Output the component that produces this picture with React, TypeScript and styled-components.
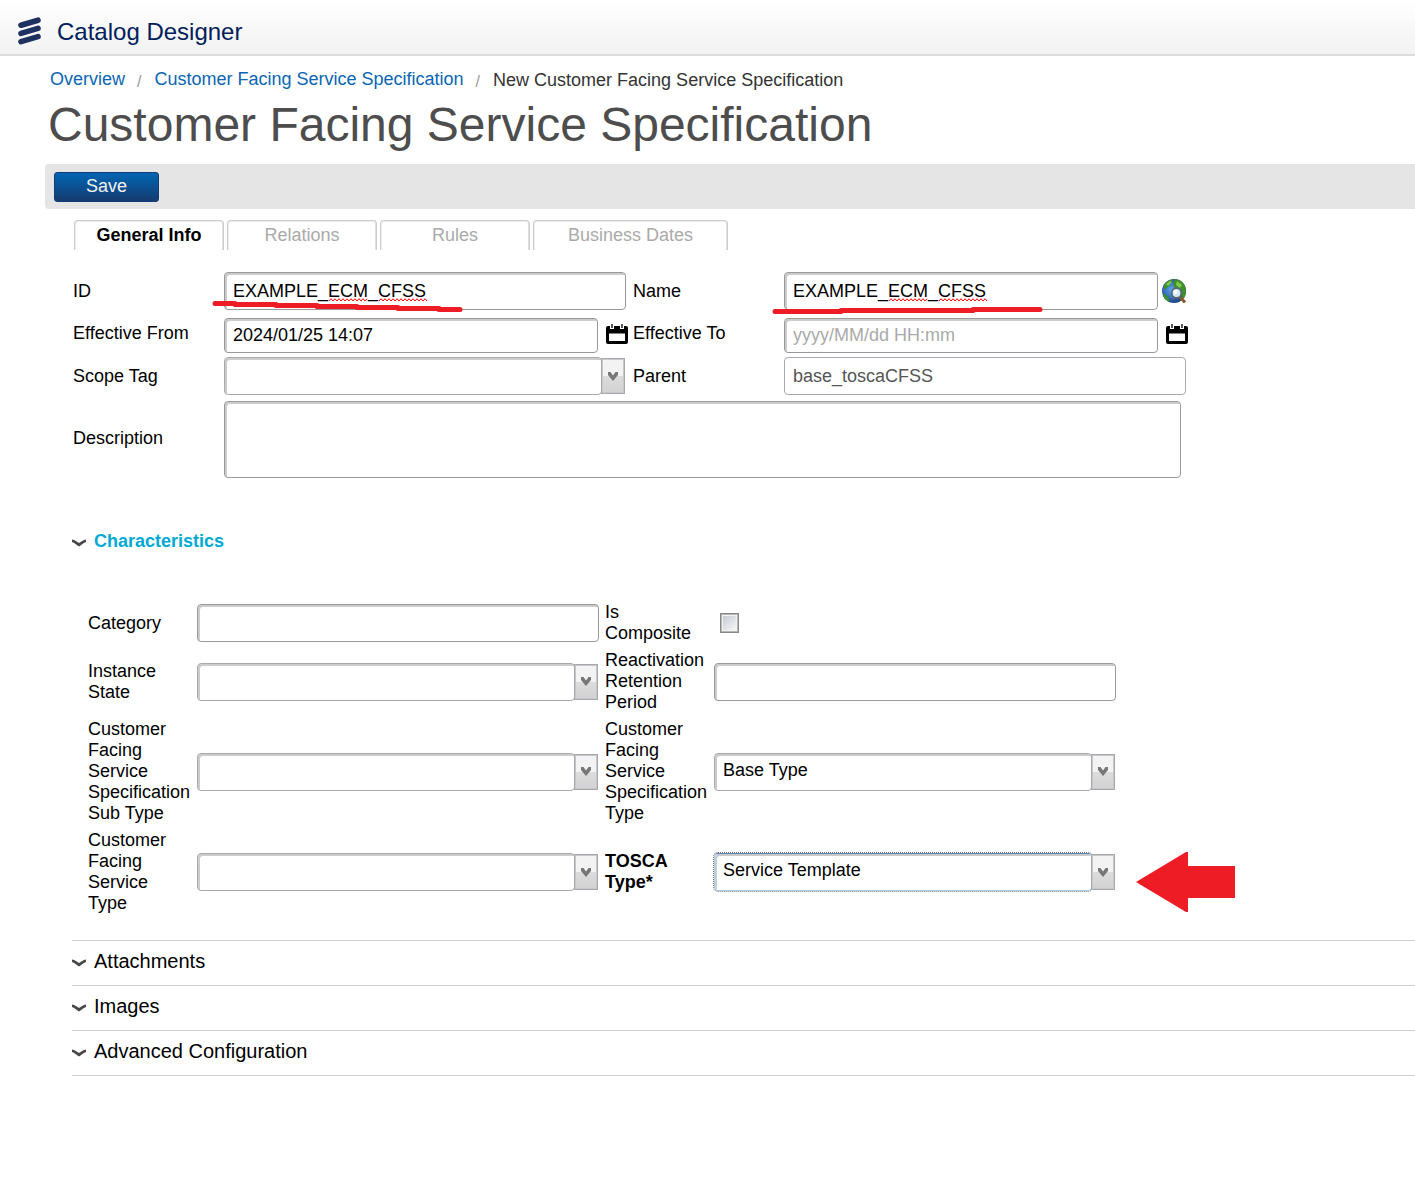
import React, { useId, useState } from "react";
import styled, { createGlobalStyle, css } from "styled-components";

const GlobalStyle = createGlobalStyle`
  *, *::before, *::after { box-sizing: border-box; }
  body {
    margin: 0;
    background: #fff;
    color: #000;
    font: 18px/21px "Liberation Sans", Arial, Helvetica, sans-serif;
    overflow-x: hidden;
  }
  button, input, select, textarea { font: inherit; color: inherit; }
`;

const ANNOTATION_RED = "#ee1c24";

/* ---------- page frame ---------- */

const Header = styled.header`
  display: flex;
  align-items: center;
  gap: 15px;
  height: 56px;
  padding: 8px 17px 0;
  border-bottom: 2px solid #dcdcdc;
  background: linear-gradient(#fff, #f2f2f2);
`;

const AppName = styled.span`
  padding-top: 2px;
  font-size: 24px;
  line-height: 28px;
  color: #00205b;
`;

const Main = styled.main`
  padding: 13px 0 40px 45px;
`;

const Crumbs = styled.nav`
  display: flex;
  padding-left: 5px;
  white-space: nowrap;
  a { color: #0a66b3; text-decoration: none; }
`;

const Slash = styled.span`
  padding: 2px 13px 0 12px;
  font-size: 16px;
  color: #999;
`;

const Current = styled.span`
  padding-top: 1px;
  color: #333;
`;

const Title = styled.h1`
  margin: 5px 0 11px;
  padding-left: 3px;
  font-size: 48px;
  line-height: 56px;
  font-weight: 400;
  color: #4d4d4d;
`;

const Toolbar = styled.div`
  display: flex;
  align-items: center;
  height: 45px;
  padding: 0 9px;
  border-radius: 4px 0 0 4px;
  background: #e5e5e5;
`;

const SaveButton = styled.button`
  width: 105px;
  height: 30px;
  padding: 0;
  border: 1px solid #143c74;
  border-radius: 3px;
  background: linear-gradient(#0066b3, #163a70);
  color: #f2f2f2;
`;

const Tabs = styled.div`
  display: flex;
  gap: 3px;
  padding: 11px 29px 0;
`;

const Tab = styled.button<{ $active?: boolean; $wide?: boolean }>`
  width: ${(p) => (p.$wide ? 195 : 150)}px;
  height: 30px;
  padding: 0;
  border: solid #ccc;
  border-width: 1px 1px 0;
  border-radius: 4px 4px 0 0;
  background: #fff;
  box-shadow: inset 1px 1px 0 #eee, inset -1px 0 0 #e0e0e0;
  color: ${(p) => (p.$active ? "#000" : "#aaa")};
  font-weight: ${(p) => (p.$active ? 700 : 400)};
`;

/* ---------- fields ---------- */

const boxed = css`
  min-width: 0;
  height: 38px;
  padding: 0 8px;
  border: 1px solid #999;
  border-radius: 4px;
  background: #fff;
  box-shadow: inset 2px 2px 0 #ccc;
  outline: none;
`;

const TextBox = styled.input<{ $short?: boolean }>`
  ${boxed}
  flex: 0 0 ${(p) => (p.$short ? 374 : 402)}px;
  width: ${(p) => (p.$short ? 374 : 402)}px;
  &::placeholder { color: #aaa; opacity: 1; }
  &:read-only { border-color: #a6abb3; box-shadow: none; color: #555; }
`;

const DateBox = styled(TextBox)`
  height: 35px;
`;

const TextArea = styled.textarea`
  ${boxed}
  display: block;
  width: 957px;
  height: 77px;
  resize: none;
`;

const Select = styled.select<{ $focused?: boolean }>`
  ${boxed}
  flex: 1;
  appearance: none;
  padding-bottom: 3px;
  border-color: #aaa;
  ${(p) =>
    p.$focused &&
    css`
      border-color: #5b83b8 #a9cdea #a9cdea;
      outline: 1px dotted #777;
    `}
`;

const SelectRow = styled.div`
  position: relative;
  display: flex;
  align-items: center;
  width: 401px;
`;

const DropArrow = styled.span`
  display: flex;
  align-items: center;
  justify-content: center;
  width: 24px;
  height: 36px;
  margin-left: -1px;
  border: 1px solid #a9a9ad;
  background: linear-gradient(#f3f3f3 50%, #dcdcdc 50%, #d2d2d2);
  box-shadow: inset 0 0 0 1px #c8c8cc;
  pointer-events: none;
`;

const IconButton = styled.button`
  display: flex;
  margin-left: 4px;
  padding: 0;
  border: 0;
  background: none;
`;

const DateButton = styled(IconButton)`
  margin-left: 8px;
  padding-bottom: 4px;
`;

const CheckBox = styled.input`
  appearance: none;
  width: 19px;
  height: 20px;
  margin: 0 0 0 6px;
  padding: 2px;
  border: 1px solid #888;
  background: linear-gradient(135deg, #c6cbd3, #f6f6f6) content-box, #f2f2f2;
  box-shadow: inset 0 0 0 1px #b5b5b5;
`;

const InfoGrid = styled.div`
  display: grid;
  grid-template-columns: 152px 408px 152px 404px;
  row-gap: 4px;
  align-items: center;
  padding: 22px 0 0 27px;
  & > label { padding-left: 1px; }
`;

const FieldRow = styled.div<{ $top?: number; $span?: boolean }>`
  position: relative;
  display: flex;
  align-items: center;
  padding-top: ${(p) => p.$top ?? 0}px;
  ${(p) => p.$span && "grid-column: span 3;"}
`;

const Overlay = styled.svg<{ $left: number; $top: number }>`
  position: absolute;
  left: ${(p) => p.$left}px;
  top: ${(p) => p.$top}px;
  pointer-events: none;
`;

/* ---------- sections ---------- */

const Sections = styled.div`
  margin: 41px 0 0 27px;
`;

const Section = styled.section`
  border-bottom: 1px solid #ccc;
`;

const SectionHead = styled.button<{ $accent?: boolean }>`
  display: flex;
  align-items: center;
  gap: 8px;
  width: 100%;
  height: 44px;
  padding: 0 0 ${(p) => (p.$accent ? 0 : 3)}px;
  border: 0;
  background: none;
  text-align: left;
  font-size: ${(p) => (p.$accent ? 18 : 20)}px;
  font-weight: ${(p) => (p.$accent ? 700 : 400)};
  color: ${(p) => (p.$accent ? "#00a9d4" : "#000")};
  svg { margin-top: 3px; }
`;

const CharGrid = styled.div`
  display: grid;
  grid-template-columns: 110px 407px 110px 402px;
  row-gap: 6px;
  align-items: center;
  padding: 39px 0 26px 15px;
`;

const CharLabel = styled.label<{ $required?: boolean }>`
  padding: 0 6px 0 1px;
  font-weight: ${(p) => (p.$required ? 700 : 400)};
`;

/* ---------- drawings ---------- */

const Logo = () => (
  <svg width="25" height="28" viewBox="0 0 25 28" aria-hidden="true">
    <g stroke="#1f3160" strokeWidth="5.6" strokeLinecap="round">
      <path d="M4 8.2 21 3.2M4 16.4 21 11.4M4 24.6 21 19.6" />
    </g>
  </svg>
);

const Chevron = () => (
  <svg width="14" height="8" viewBox="0 0 14 8" aria-hidden="true">
    <path d="M0 .5C3 1 5 3 7 4c2-1 4-3 7-3.5V3C11 4 9 6.5 7 7.6 5 6.5 3 4 0 3Z" fill="#484848" />
  </svg>
);

const Calendar = () => (
  <svg width="22" height="20" viewBox="0 0 22 20" aria-hidden="true">
    <path
      fillRule="evenodd"
      d="M2 2h2v3h4V2h6v3h4V2h2a2 2 0 0 1 2 2v14a2 2 0 0 1-2 2H2a2 2 0 0 1-2-2V4a2 2 0 0 1 2-2ZM3 9.500v7.500h16V9.500Z"
    />
    <path d="M6 0v4M16 0v4" stroke="#222" strokeWidth="1.5" />
  </svg>
);

const Globe = () => (
  <svg width="24" height="24" viewBox="0 0 24 24" aria-hidden="true">
    <defs>
      <radialGradient id="sea" cx=".4" cy=".45" r=".6">
        <stop offset="0" stopColor="#5da9f0" />
        <stop offset="1" stopColor="#163c7c" />
      </radialGradient>
    </defs>
    <circle cx="12" cy="12" r="12" fill="url(#sea)" />
    <path d="M2 6C5 2 8 0 12 0L9 3 7 4l1 2-3 3-3 1ZM13 0c6 0 11 5 11 12 0 4-1 6-3 8l-2-6-2-4-5-2-1-4ZM1 15l3 1 3 4 0 3c-4-2-6-5-6-8Z" fill="#3f8f2c" />
    <path d="m4 5 4-3 2 1-4 4ZM15 2l5 4-2 3-4-3Z" fill="#82c94e" />
    <path d="m18 18 5 5.500" stroke="#8b5a2b" strokeWidth="3" />
    <circle cx="14.500" cy="14" r="4.800" fill="#cfe9f5" stroke="#5c6670" strokeWidth="1.800" />
    <circle cx="13.500" cy="13" r="2" fill="#fff" />
  </svg>
);

const Squiggles = () => (
  <Overlay $left={105} $top={26} width="100" height="4" aria-hidden="true">
    {[
      [0, 39],
      [50, 98],
    ].map(([from, to]) => {
      const steps = Math.floor((to - from) / 2);
      const d = Array.from({ length: steps + 1 }, (_, i) => `${i ? "L" : "M"}${from + i * 2} ${i % 2 ? 0.7 : 3}`);
      return <path key={from} d={d.join("")} stroke="#f00" fill="none" />;
    })}
  </Overlay>
);

const IdStroke = () => (
  <Overlay $left={-12} $top={28} width="252" height="14" aria-hidden="true">
    <path
      d="M3 3.500H23M23 4.500H64M64 5.500H105M105 6.500H145M145 7.500H186M186 8.500H227M227 9.500H248"
      stroke={ANNOTATION_RED}
      strokeWidth="5"
      strokeLinecap="round"
    />
  </Overlay>
);

const NameStroke = () => (
  <Overlay $left={-12} $top={34} width="274" height="10" aria-hidden="true">
    <path d="M3 5.500H69M69 4.500H201M201 3.500H268" stroke={ANNOTATION_RED} strokeWidth="5" strokeLinecap="round" />
  </Overlay>
);

const PointerArrow = () => (
  <Overlay $left={422} $top={-1} width="100" height="60" aria-hidden="true">
    <path d="M0 30 50 0h2v14h47v32H52v14h-2Z" fill={ANNOTATION_RED} />
  </Overlay>
);

/* ---------- composed parts ---------- */

type DropDownProps = { id: string; value?: string; focused?: boolean; children?: React.ReactNode };

const DropDown = ({ id, value = "", focused, children }: DropDownProps) => (
  <SelectRow>
    <Select id={id} $focused={focused} defaultValue={value}>
      <option value={value}>{value}</option>
    </Select>
    <DropArrow>
      <svg width="10" height="9" viewBox="0 0 10 9" aria-hidden="true">
        <path d="M0 0h2.500L5 3.500 7.500 0H10v3L5 9 0 3Z" fill="#777" />
      </svg>
    </DropArrow>
    {children}
  </SelectRow>
);

const TABS = ["General Info", "Relations", "Rules", "Business Dates"];
const CLOSED_SECTIONS = ["Attachments", "Images", "Advanced Configuration"];

export default function App() {
  const uid = useId();
  const [tab, setTab] = useState(TABS[0]);
  const id = (name: string) => `${uid}-${name}`;

  return (
    <>
      <GlobalStyle />
      <Header>
        <Logo />
        <AppName>Catalog Designer</AppName>
      </Header>
      <Main>
        <Crumbs aria-label="Breadcrumb">
          <a href="#overview">Overview</a>
          <Slash>/</Slash>
          <a href="#specifications">Customer Facing Service Specification</a>
          <Slash>/</Slash>
          <Current>New Customer Facing Service Specification</Current>
        </Crumbs>
        <Title>Customer Facing Service Specification</Title>
        <Toolbar>
          <SaveButton type="button">Save</SaveButton>
        </Toolbar>
        <Tabs role="tablist">
          {TABS.map((name) => (
            <Tab
              key={name}
              type="button"
              role="tab"
              aria-selected={tab === name}
              $active={tab === name}
              $wide={name === "Business Dates"}
              onClick={() => setTab(name)}
            >
              {name}
            </Tab>
          ))}
        </Tabs>

        <InfoGrid>
          <label htmlFor={id("id")}>ID</label>
          <FieldRow>
            <TextBox id={id("id")} defaultValue="EXAMPLE_ECM_CFSS" spellCheck={false} />
            <Squiggles />
            <IdStroke />
          </FieldRow>
          <label htmlFor={id("name")}>Name</label>
          <FieldRow>
            <TextBox id={id("name")} $short defaultValue="EXAMPLE_ECM_CFSS" spellCheck={false} />
            <IconButton type="button" aria-label="Translate name">
              <Globe />
            </IconButton>
            <Squiggles />
            <NameStroke />
          </FieldRow>

          <label htmlFor={id("from")}>Effective From</label>
          <FieldRow $top={4}>
            <DateBox id={id("from")} $short defaultValue="2024/01/25 14:07" />
            <DateButton type="button" aria-label="Pick start date">
              <Calendar />
            </DateButton>
          </FieldRow>
          <label htmlFor={id("to")}>Effective To</label>
          <FieldRow $top={4}>
            <DateBox id={id("to")} $short placeholder="yyyy/MM/dd HH:mm" />
            <DateButton type="button" aria-label="Pick end date">
              <Calendar />
            </DateButton>
          </FieldRow>

          <label htmlFor={id("scope")}>Scope Tag</label>
          <DropDown id={id("scope")} />
          <label htmlFor={id("parent")}>Parent</label>
          <FieldRow>
            <TextBox id={id("parent")} readOnly value="base_toscaCFSS" />
          </FieldRow>

          <label htmlFor={id("description")}>Description</label>
          <FieldRow $top={2} $span>
            <TextArea id={id("description")} />
          </FieldRow>
        </InfoGrid>

        <Sections>
          <Section>
            <SectionHead type="button" $accent aria-expanded="true">
              <Chevron />
              Characteristics
            </SectionHead>
            <CharGrid>
              <CharLabel htmlFor={id("category")}>Category</CharLabel>
              <TextBox id={id("category")} />
              <CharLabel htmlFor={id("composite")}>Is Composite</CharLabel>
              <CheckBox id={id("composite")} type="checkbox" />

              <CharLabel htmlFor={id("state")}>Instance State</CharLabel>
              <DropDown id={id("state")} />
              <CharLabel htmlFor={id("retention")}>Reactivation Retention Period</CharLabel>
              <TextBox id={id("retention")} />

              <CharLabel htmlFor={id("subtype")}>Customer Facing Service Specification Sub Type</CharLabel>
              <DropDown id={id("subtype")} />
              <CharLabel htmlFor={id("spectype")}>Customer Facing Service Specification Type</CharLabel>
              <DropDown id={id("spectype")} value="Base Type" />

              <CharLabel htmlFor={id("servicetype")}>Customer Facing Service Type</CharLabel>
              <DropDown id={id("servicetype")} />
              <CharLabel htmlFor={id("tosca")} $required>
                TOSCA Type*
              </CharLabel>
              <DropDown id={id("tosca")} value="Service Template" focused>
                <PointerArrow />
              </DropDown>
            </CharGrid>
          </Section>
          {CLOSED_SECTIONS.map((name) => (
            <Section key={name}>
              <SectionHead type="button" aria-expanded="false">
                <Chevron />
                {name}
              </SectionHead>
            </Section>
          ))}
        </Sections>
      </Main>
    </>
  );
}
